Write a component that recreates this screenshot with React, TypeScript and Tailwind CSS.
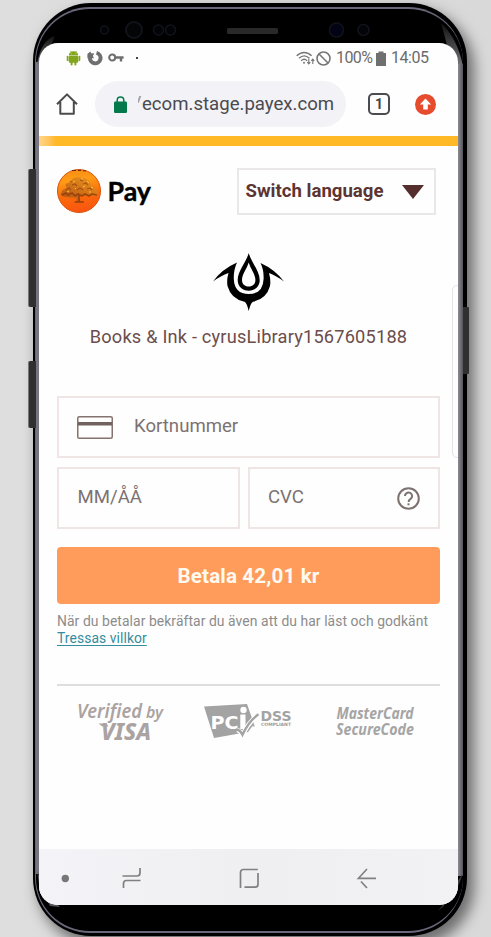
import type { ReactNode } from "react";

function StatusBar() {
  return (
    <div className="flex h-[30px] items-center pl-[27px] pr-[28px] text-[#6b6b6b]">
      <svg className="h-[16px] w-[15px]" viewBox="0 0 15 16" fill="#82a51c">
        <path d="M2.8 5.4a4.7 4.2 0 0 1 9.4 0z" />
        <path d="M4.5 0.8l1.2 2M10.5 0.8l-1.2 2" stroke="#82a51c" strokeWidth=".7" />
        <rect x="2.8" y="5.9" width="9.4" height="6.8" rx="1" />
        <rect x=".7" y="5.7" width="1.8" height="5.4" rx=".9" />
        <rect x="12.5" y="5.7" width="1.8" height="5.4" rx=".9" />
        <rect x="4.6" y="11" width="2" height="4.4" rx="1" />
        <rect x="8.4" y="11" width="2" height="4.4" rx="1" />
        <circle cx="5.6" cy="3.6" r=".4" fill="#fff" />
        <circle cx="9.4" cy="3.6" r=".4" fill="#fff" />
      </svg>
      <svg className="ml-[6px] h-[16px] w-[16px]" viewBox="0 0 16 16" fill="none" stroke="#6f6f6f">
        <path d="M9.5 2.9A5.3 5.3 0 1 1 3 7.3" strokeWidth="4" />
        <path d="M.4 8.200V4L3.200 1.600l1 1.600 3.200.3-1.500 2.200 1 2.500z" fill="#6f6f6f" stroke="none" />
      </svg>
      <svg className="ml-[5px] h-[10px] w-[16px]" viewBox="0 0 16 10" fill="none" stroke="#6f6f6f">
        <circle cx="4.2" cy="4.5" r="3" strokeWidth="2.1" />
        <path d="M7.2 4.5H15.6M13 4.5V8.6" strokeWidth="2.4" />
      </svg>
      <span className="ml-[12px] size-[2px] bg-[#444]" />
      <svg className="ml-auto h-[15px] w-[19px]" viewBox="0 0 19 15" fill="none" stroke="#777" strokeWidth="1.4">
        <path d="M.7 4.8C5.2.4 11.2.4 15.6 4.8M3 7.3c3.2-3 7.2-3 10.4 0M5.2 9.7c1.8-1.7 4.1-1.7 5.9 0" />
        <circle cx="8" cy="11.8" r="1" fill="#777" stroke="none" />
        <path d="M12.8 7.7v5M11.3 11.2l1.5 1.7 1.5-1.7M16.8 13V8.3M15.3 9.9l1.5-1.7 1.5 1.7" strokeWidth="1.1" />
      </svg>
      <svg className="ml-[1px] h-[15px] w-[15px]" viewBox="0 0 15 15" fill="none" stroke="#777" strokeWidth="1.6">
        <circle cx="7.5" cy="7.5" r="6.5" />
        <path d="M3 3l9 9" />
      </svg>
      <span className="ml-[5px] w-[36px] whitespace-nowrap text-[16px] leading-[20px] tracking-[-0.6px]">100%</span>
      <svg className="ml-[4px] h-[15px] w-[10px]" viewBox="0 0 10 15" fill="#6f6f6f">
        <path d="M0 2h2.500V.5h5V2H10v13H0z" />
      </svg>
      <span className="ml-[5px] w-[39px] whitespace-nowrap text-[16px] leading-[20px] tracking-[-0.45px]">14:05</span>
    </div>
  );
}

function BrowserBar() {
  return (
    <div className="flex h-[63px] items-center pb-[1px] pl-[17px] pr-[22px]">
      <svg className="h-[22px] w-[22px]" viewBox="0 0 22 22" fill="none" stroke="#4b4b4d" strokeWidth="2">
        <path d="M1 11.2L11 1.400l10 9.800M4.300 9v11.800h13.500V9" strokeLinejoin="round" />
      </svg>
      <div className="ml-[17px] flex h-[46px] w-[251px] items-center rounded-full bg-[#f2f2f7] pl-[19px]">
        <svg className="h-[17px] w-[13px]" viewBox="0 0 13 17">
          <rect x="0" y="5.5" width="13" height="11.5" rx="1.2" fill="#04794a" />
          <path d="M3.2 6.5V4.2a3.3 3.3 0 0 1 6.6 0v2.3" fill="none" stroke="#04794a" strokeWidth="1.5" />
        </svg>
        <div className="ml-[11px] flex items-center overflow-hidden whitespace-nowrap text-[18.6px] leading-[26px] text-[#4a4a50]">
          <span className="mb-[9px] block h-[7px] w-[1.5px] -skew-x-[20deg] bg-[#a2a2a8]" />
          <span className="ml-[2.5px]">ecom.stage.payex.com</span>
        </div>
      </div>
      <span className="ml-[22px] flex size-[22px] items-center justify-center rounded-[5px] border-2 border-[#4b4b52] text-[14px] font-bold leading-none text-[#444]">
        1
      </span>
      <svg className="ml-auto size-[21px]" viewBox="0 0 21 21">
        <circle cx="10.5" cy="10.5" r="10.5" fill="#e54b2c" />
        <path d="M10.5 4.6l5.6 5.8h-3.300v5.200H8.200v-5.200H4.900z" fill="#fff" />
      </svg>
    </div>
  );
}

function TreeBadge() {
  return (
    <svg className="size-[44px]" viewBox="0 0 44 44">
      <defs>
        <linearGradient id="badge" x1="0" y1="0" x2=".15" y2="1">
          <stop offset="0" stopColor="#f78b12" />
          <stop offset=".3" stopColor="#ff9b16" />
          <stop offset=".65" stopColor="#fa6b0b" />
          <stop offset="1" stopColor="#fb5610" />
        </linearGradient>
        <linearGradient id="leaf" x1="0" y1="1" x2="1" y2="0">
          <stop offset="0" stopColor="#a34912" />
          <stop offset="1" stopColor="#f09b20" />
        </linearGradient>
      </defs>
      <circle cx="22" cy="22" r="21.5" fill="url(#badge)" stroke="#d7530b" strokeWidth="1" />
      <path d="M3.500 26l2-5 4-2-1-4 5-2 3-4 6-1 5 1 5 3 2 5 4 2 3 4-2 4-9 0-5-1-3 2 1 4 5 1.500H16l4-2-1-3-6 0-7-1z" fill="url(#leaf)" opacity=".85" />
      <path d="M5 26l4-2 2 2 4-2 3 3 3-2 4 2 3-2 4 2 3-2 5 1M22 25v8M18 33h9" fill="none" stroke="#8d3a0c" strokeWidth="1.6" opacity=".8" />
      <path d="M9 21l3-2 2 2M15 16l3-1 2 2M20 21l3-2 3 2M26 15l3-1 2 2M30 20l3-1 2 2M13 13l2-1M23 11l3 1" fill="none" stroke="#9d470e" strokeWidth="1.1" opacity=".8" />
      <path d="M24 9l2 1M30 12l2 2M16 13l2-1M34 18l2 1M26 18l2-1M10 23l2-1M18 19l1 1M32 23l2 0" stroke="#ffc13b" strokeWidth="1" />
      <path d="M15 1.500h4M21 1.500h3M26 1.800h3" stroke="#702700" strokeWidth="1" />
    </svg>
  );
}

function MerchantMark() {
  return (
    <svg className="ml-[156px] h-[58px] w-[72px]" viewBox="0 0 72 58">
      <path d="M0 28.500Q9 16 24 9.500Q20.500 17 20.800 26Q21.500 41 35.700 41Q50 41 50.600 26Q51 17 47.500 10Q62 16.500 71 28.500Q63 22.500 56 20Q58 27 57 33Q53.500 46 40 48.700Q37.500 50 35.700 58Q34 50 31.500 48.700Q18 46 14.500 33Q13.500 27 15.500 20Q8 22.500 0 28.500Z" />
      <path fillRule="evenodd" d="M35.700 0C38 9 46.700 18 46.700 27C46.700 33.500 42 37.700 35.700 37.700S24.700 33.500 24.700 27C24.700 18 33.400 9 35.700 0ZM35.700 9.500C33.800 16 29 21 29 27C29 31.200 31.800 33.500 35.700 33.500S42.400 31.200 42.400 27C42.400 21 37.600 16 35.700 9.500Z" />
    </svg>
  );
}

function Field({ className, children }: { className: string; children: ReactNode }) {
  return (
    <div className={`flex h-[62px] items-center border-2 border-[#eee5e4] text-[18.6px] leading-[24px] text-[#7c7271] ${className}`}>
      {children}
    </div>
  );
}

function TrustLogos() {
  return (
    <svg className="block h-[50px] w-[383px]" viewBox="57 697 383 50" fontFamily="'Noto Sans', sans-serif">
      <g fill="#aaa3a2" fontStyle="italic" fontWeight="600">
        <text x="77" y="718" fontSize="19" textLength="65" lengthAdjust="spacingAndGlyphs">Verified</text>
        <text x="146" y="718" fontSize="16" textLength="17" lengthAdjust="spacingAndGlyphs">by</text>
        <text x="101" y="739.5" fontSize="22.5" fontWeight="800" textLength="50" lengthAdjust="spacingAndGlyphs">VISA</text>
      </g>
      <path d="M98.5 723.500h8l2 3h-6z" fill="#aaa3a2" />
      <path d="M204 706.500l43-2.500 7 20-6 8-34 6z" fill="#a3a3a3" />
      <text x="210.5" y="729" fill="#fff" fontFamily="'DejaVu Sans', sans-serif" fontSize="18.5" fontWeight="700" textLength="28" lengthAdjust="spacingAndGlyphs">PC</text>
      <rect x="240.300" y="714.500" width="5.200" height="14.500" fill="#fff" />
      <circle cx="243.500" cy="710" r="3.200" fill="#fff" />
      <path d="M237 730q3 .5 5.500 5q6-13 15.500-20" fill="none" stroke="#fff" strokeWidth="4.600" />
      <path d="M236.500 729.500q3.500 .5 6 5.300q6-13.500 16-20.500" fill="none" stroke="#a3a3a3" strokeWidth="2.400" />
      <rect x="252.500" y="724.500" width="2" height="2" fill="#aaa" />
      <text x="260.5" y="720.5" fill="#a3a3a3" fontFamily="'DejaVu Sans', sans-serif" fontSize="13.5" fontWeight="700" textLength="31" lengthAdjust="spacingAndGlyphs">DSS</text>
      <text x="261" y="725.5" fill="#999" fontFamily="'DejaVu Sans', sans-serif" fontWeight="700" fontSize="4.5" textLength="30" lengthAdjust="spacingAndGlyphs">COMPLIANT</text>
      <g fill="#a5a5a5" fontStyle="italic" fontWeight="700">
        <text x="336.500" y="718.500" fontSize="16.500" textLength="77" lengthAdjust="spacingAndGlyphs">MasterCard</text>
        <text x="336" y="734.500" fontSize="16.500" textLength="78" lengthAdjust="spacingAndGlyphs">SecureCode</text>
      </g>
    </svg>
  );
}

function PaymentPage() {
  return (
    <main className="flex h-[703px] flex-col pl-[18px] pr-[18px] pt-[22px]">
      <header className="flex items-start justify-between pr-[4px]">
        <div className="flex items-center pt-[1px]">
          <TreeBadge />
          <svg className="ml-[5px] h-[40px] w-[50px]" viewBox="0 0 50 40">
            <text x="1.500" y="30" fontFamily="Lato, sans-serif" fontWeight="700" fontSize="27.500" textLength="43.500" lengthAdjust="spacingAndGlyphs" stroke="#000" strokeWidth=".4">Pay</text>
          </svg>
        </div>
        <div className="flex h-[47px] w-[199px] items-center border-2 border-[#e9e7e7] pl-[6.5px] text-[#5b3533]">
          <span className="w-[138px] whitespace-nowrap pb-[1px] text-[18.6px] font-bold leading-[24px]">Switch language</span>
          <svg className="ml-[18.5px] h-[14px] w-[22px]" viewBox="0 0 22 14" fill="#552f2d">
            <path d="M0 0h22L11 14z" />
          </svg>
        </div>
      </header>

      <div className="mt-[38px]">
        <MerchantMark />
      </div>
      <p className="mt-[13px] whitespace-nowrap text-center text-[18.2px] leading-[26px] tracking-[0.2px] text-[#6b4d4b]">
        Books &amp; Ink - cyrusLibrary1567605188
      </p>

      <form className="mt-[46px]">
        <Field className="pb-[2px] pl-[18px]">
          <svg className="mt-[3px] h-[23px] w-[36px]" viewBox="0 0 36 23" fill="none" stroke="#84736f" strokeWidth="1.5">
            <rect x=".75" y=".75" width="34.500" height="21.500" rx="1.500" />
            <path d="M1 7.700h34" strokeWidth="3.600" stroke="#716260" />
          </svg>
          <span className="ml-[21px]">Kortnummer</span>
        </Field>
        <div className="mt-[9px] flex justify-between">
          <Field className="w-[183px] pb-[2px] pl-[18.5px]">MM/ÅÅ</Field>
          <Field className="w-[192px] justify-between pb-[1px] pl-[18px] pr-[18px]">
            <span className="pb-[1px]">CVC</span>
            <svg className="mt-[1px] size-[23px]" viewBox="0 0 23 23" fill="none" stroke="#7e7270" strokeWidth="2">
              <circle cx="11.5" cy="11.5" r="10.3" />
              <path d="M7.900 9.100a3.600 3.500 0 1 1 5.700 2.800c-1.500 1-2 1.500-2 3" />
              <path d="M11.500 16.300v2" />
            </svg>
          </Field>
        </div>
        <button type="button" className="mt-[18px] block h-[57px] w-full rounded-[4px] bg-[#ff9c5b] text-[20.6px] font-bold leading-[24px] tracking-[0.15px] text-[#fffaf0]">
          Betala 42,01 kr
        </button>
      </form>

      <p className="mt-[9px] whitespace-nowrap text-[13.9px] leading-[17px] tracking-[0.07px] text-[#8c8c8c]">
        När du betalar bekräftar du även att du har läst och godkänt
        <br />
        <a className="text-[#348d9d] underline underline-offset-2">Tressas villkor</a>
      </p>

      <div className="mt-[37px] h-[2px] shrink-0 bg-[#dedede]" />
      <div className="mt-[11px]">
        <TrustLogos />
      </div>
    </main>
  );
}

function NavigationBar() {
  return (
    <nav className="h-[56px] bg-linear-to-r from-[#f4f3f7] via-[#efeef1] to-[#f2f2f4]">
      <svg className="h-[56px] w-[419px]" viewBox="39 849 419 56" fill="none" stroke="#808080" strokeWidth="1.7">
        <circle cx="65.3" cy="878.5" r="3.7" fill="#777" stroke="none" />
        <path d="M122.500 876H137q3 0 3-3V868M140.500 880.500H126.500q-3 0-3 3V888" />
        <path d="M240.500 888V872.500q0-3 3-3h14.300M244.500 887.200H255q3 0 3-3V873" />
        <path d="M376 878.300h-17.500L367 869M361 881.500l6 6.500" />
      </svg>
    </nav>
  );
}

function PhoneShell({ children }: { children: ReactNode }) {
  return (
    <div className="relative h-[937px] w-[491px] overflow-hidden bg-linear-to-r from-[#dedede] to-[#d9d9d9]">
      <div className="absolute left-[28px] top-[169px] h-[138px] w-[10px] rounded-l-[2px] border-l border-[#777] bg-[#303030]" />
      <div className="absolute left-[28px] top-[361px] h-[67px] w-[10px] rounded-l-[2px] border-l border-[#777] bg-[#303030]" />
      <div className="absolute left-[463px] top-[307px] h-[67px] w-[6px] rounded-r-[1px] bg-[#303030]" />

      <div className="ml-[33px] mt-[3px] h-[933px] w-[434px] rounded-[58px] bg-black pb-[2px] pl-[2px] pr-[4px] pt-[4px] shadow-[6px_8px_14px_1px_rgba(0,0,0,0.5)]">
        <div className="h-[926px] rounded-[55px] border-2 border-l border-r-0 border-[#6b677b] bg-black pl-[3px]">
          <div className="relative h-[34px]">
            <svg className="absolute left-[-3px] top-[-2px] h-[931px] w-[431px]" viewBox="36 7 431 931">
              <defs>
                <linearGradient id="rim" x1="0" y1="0" x2="1" y2="0">
                  <stop offset="0" stopColor="#8b8b91" />
                  <stop offset="1" stopColor="#55555b" />
                </linearGradient>
                <linearGradient id="glint" x1="0" y1="0" x2="0" y2="1">
                  <stop offset="0" stopColor="#111" />
                  <stop offset="1" stopColor="#707076" />
                </linearGradient>
              </defs>
              <rect x="36" y="62" width="3" height="812" fill="#77757f" />
              <path d="M37 64Q41 40 55 36L49 50L39 64Z" fill="url(#glint)" />
              <path d="M37 870Q43 893 60 907L50 906L39 884Z" fill="#55555b" />
              <rect x="458" y="64" width="5" height="812" fill="url(#rim)" />
              <path d="M441 23Q457 38 462.500 64H456L447 45Z" fill="url(#glint)" />
              <path d="M462.500 874Q457 895 438 911L446 901L457 882Z" fill="#3c3c41" />
              <g stroke="#11131a" strokeWidth="1.5">
                <circle cx="104.5" cy="30" r="4" fill="#020306" />
                <circle cx="134" cy="30" r="8" fill="#030507" strokeWidth="2" />
                <circle cx="158.5" cy="30" r="5" fill="#020306" />
                <circle cx="170.5" cy="30" r="5" fill="#020306" />
                <circle cx="336.5" cy="30" r="7" fill="#020315" />
                <circle cx="363.5" cy="30" r="5.5" fill="#030309" />
              </g>
              <rect x="227" y="28" width="51" height="6" rx="1.5" fill="#29292a" />
            </svg>
          </div>
          <div className="relative h-[862px] w-[419px] overflow-hidden rounded-[19px] bg-[#fefefe]">
            {children}
          </div>
        </div>
      </div>
    </div>
  );
}

export default function App() {
  return (
    <div className="font-[Roboto,'Noto_Sans',sans-serif]">
      <PhoneShell>
        <StatusBar />
        <BrowserBar />
        <div className="h-[10px] bg-linear-to-r from-[#ffd58a] via-[#ffb926] via-[4%] to-[#ffb926]" />
        <PaymentPage />
        <NavigationBar />
        <div className="absolute right-[-4px] top-[242px] h-[173px] w-[10px] rounded-[6px] border border-[#e3e3e8]" />
      </PhoneShell>
    </div>
  );
}
